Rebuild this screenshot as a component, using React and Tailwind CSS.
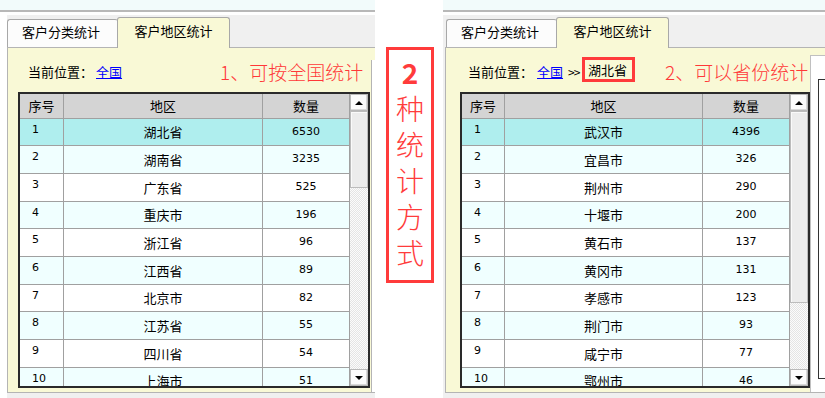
import React from 'react';

const cjk = "font-['Noto_Sans_CJK_SC',sans-serif]";
const num = "font-['DejaVu_Sans',sans-serif]";

const provinces = [
  ['湖北省', 6530],
  ['湖南省', 3235],
  ['广东省', 525],
  ['重庆市', 196],
  ['浙江省', 96],
  ['江西省', 89],
  ['北京市', 82],
  ['江苏省', 55],
  ['四川省', 54],
  ['上海市', 51],
];

const cities = [
  ['武汉市', 4396],
  ['宜昌市', 326],
  ['荆州市', 290],
  ['十堰市', 200],
  ['黄石市', 137],
  ['黄冈市', 131],
  ['孝感市', 123],
  ['荆门市', 93],
  ['咸宁市', 77],
  ['鄂州市', 46],
];

function ScrollBtn({ up }) {
  return (
    <div className="flex h-[17px] items-center justify-center border border-[#b9b9b9] bg-[#fbfbfb] shadow-[inset_-1px_-1px_0_#d8d8d8]">
      {up ? (
        <div className="h-0 w-0 border-x-[4px] border-b-[4px] border-x-transparent border-b-black" />
      ) : (
        <div className="h-0 w-0 border-x-[4px] border-t-[4px] border-x-transparent border-t-black" />
      )}
    </div>
  );
}

function ScrollBar({ thumb }) {
  return (
    <div className="flex w-[18px] flex-col bg-[#f3f3f3]">
      <ScrollBtn up />
      <div className={`${thumb} border border-[#bcbcbc] bg-[#ececec] shadow-[inset_1px_1px_0_#fafafa]`} />
      <div className="flex-1 bg-[image:repeating-conic-gradient(#e4e4e4_0_25%,#fbfbfb_0_50%)] bg-[length:2px_2px]" />
      <ScrollBtn />
    </div>
  );
}

function Row({ i, name, n, c1, c2 }) {
  const h = i % 3 === 1 ? 'h-[27px]' : 'h-[28px]';
  const bg = i === 1 ? 'bg-[#afeeee]' : i % 2 === 0 ? 'bg-[#f0ffff]' : 'bg-white';
  return (
    <div className={`flex shrink-0 ${h} ${bg} border-b border-[#a0a0a0]`}>
      <div className={`${c1} flex items-center border-r border-[#a0a0a0] pb-[4px] pl-[12px] text-[11px] ${num}`}>
        {i}
      </div>
      <div className={`${c2} flex items-center justify-center border-r border-[#a0a0a0] text-[13px] ${cjk}`}>
        {name}
      </div>
      <div className={`flex flex-1 items-center justify-center text-[11px] ${num}`}>{n}</div>
    </div>
  );
}

function RegionTable({ rows, w, c1, c2, thumb }) {
  return (
    <div className={`flex h-[296px] ${w} border-2 border-[#2a2a2a] bg-white`}>
      <div className="flex flex-1 flex-col overflow-hidden border-r border-[#a0a0a0]">
        <div className={`flex h-[25px] shrink-0 border-b border-[#a0a0a0] bg-[#d4d4d4] text-[13px] ${cjk}`}>
          <div className={`${c1} flex items-center justify-center border-r border-[#a0a0a0]`}>序号</div>
          <div className={`${c2} flex items-center justify-center border-r border-[#a0a0a0]`}>地区</div>
          <div className="flex flex-1 items-center justify-center">数量</div>
        </div>
        {rows.map(([name, n], k) => (
          <Row key={name} i={k + 1} name={name} n={n} c1={c1} c2={c2} />
        ))}
      </div>
      <ScrollBar thumb={thumb} />
    </div>
  );
}

function Tabs() {
  return (
    <div className={`flex items-end text-[13px] ${cjk}`}>
      <div className="flex h-[28px] w-[111px] items-center justify-center rounded-t-[3px] border-l border-t border-[#a8a8a8] bg-[#fcfcfc] pb-[3px] pr-[4px]">
        客户分类统计
      </div>
      <div className="relative z-10 -mb-px -ml-px flex h-[31px] w-[113px] items-center justify-center rounded-t-[3px] border-x border-t border-[#a8a8a8] bg-[#f9f9d6] pb-[4px]">
        客户地区统计
      </div>
    </div>
  );
}

function Panel({ width, lead, tabsPad, contentMl, sliver, crumb, table }) {
  return (
    <div className={`flex h-full ${width} shrink-0 flex-col`}>
      <div className="h-[10px] bg-[#f2fbfb]" />
      <div className="h-[2px] bg-[#b8b8b8]" />
      <div className="h-[3px] bg-white" />
      <div className="flex flex-1">
        {lead}
        <div className="flex flex-1 flex-col bg-[#f0f0f0]">
          <div className={`flex h-[32px] items-end ${tabsPad}`}>
            <Tabs />
          </div>
          <div className={`flex h-[346px] border-y border-l border-[#b4b4b4] bg-[#f9f9d6] ${contentMl}`}>
            <div className="flex flex-1 flex-col">
              {crumb}
              {table}
            </div>
            {sliver}
          </div>
        </div>
      </div>
    </div>
  );
}

export default function App() {
  return (
    <div className={`flex h-[398px] w-[825px] overflow-hidden bg-white text-black ${cjk}`}>
      <Panel
        width="w-[375px]"
        lead={<div className="w-[7px] bg-white" />}
        tabsPad=""
        contentMl=""
        sliver={<div className="mt-[12px] w-[4px] border-l border-[#b4b4b4] bg-white" />}
        crumb={
          <div className="flex h-[44px] items-center pl-[20px] pt-[4px] text-[13px]">
            <span>当前位置：</span>
            <span className="ml-[3px] text-[#0000ff] underline">全国</span>
            <span className="ml-[98px] text-[19px] font-light text-[#ff3838]">1、可按全国统计</span>
          </div>
        }
        table={
          <div className="ml-[10px]">
            <RegionTable rows={provinces} w="w-[352px]" c1="w-[44px]" c2="w-[199px]" thumb="h-[77px]" />
          </div>
        }
      />

      <div className="w-[68px] shrink-0">
        <div className="ml-[11px] mt-[47px] flex h-[236px] w-[48px] flex-col items-center border-[3px] border-[#ff3b3b] pt-[4px] text-[28px] text-[#ff3b3b]">
          <div className="h-[36px] leading-[36px] font-bold">2</div>
          <div className="h-[36px] leading-[36px] font-light">种</div>
          <div className="h-[36px] leading-[36px] font-light">统</div>
          <div className="h-[36px] leading-[36px] font-light">计</div>
          <div className="h-[36px] leading-[36px] font-light">方</div>
          <div className="h-[36px] leading-[36px] font-light">式</div>
        </div>
      </div>

      <Panel
        width="w-[382px]"
        lead={null}
        tabsPad="pl-[3px]"
        contentMl="ml-[2px]"
        sliver={
          <div className="mt-[7px] w-[15px] border-l border-t border-[#c0c0c0] bg-white">
            <div className="ml-[7px] mt-[23px] h-[300px] border-y border-l border-[#333]" />
          </div>
        }
        crumb={
          <div className="flex h-[44px] items-center pl-[22px] pt-[4px] text-[13px]">
            <span>当前位置：</span>
            <span className="ml-[4px] text-[#0000ff] underline">全国</span>
            <span className="ml-[5px] w-[14px] text-[12px] tracking-[-1px]">&gt;&gt;</span>
            <span className="-mt-[6px] border-[3px] border-[#ff3b3b] pl-[3px] pr-[5px] leading-[19px]">湖北省</span>
            <span className="ml-[30px] text-[19px] font-light text-[#ff3838]">2、可以省份统计</span>
          </div>
        }
        table={
          <div className="ml-[14px]">
            <RegionTable rows={cities} w="w-[350px]" c1="w-[43px]" c2="w-[198px]" thumb="h-[192px]" />
          </div>
        }
      />
    </div>
  );
}
